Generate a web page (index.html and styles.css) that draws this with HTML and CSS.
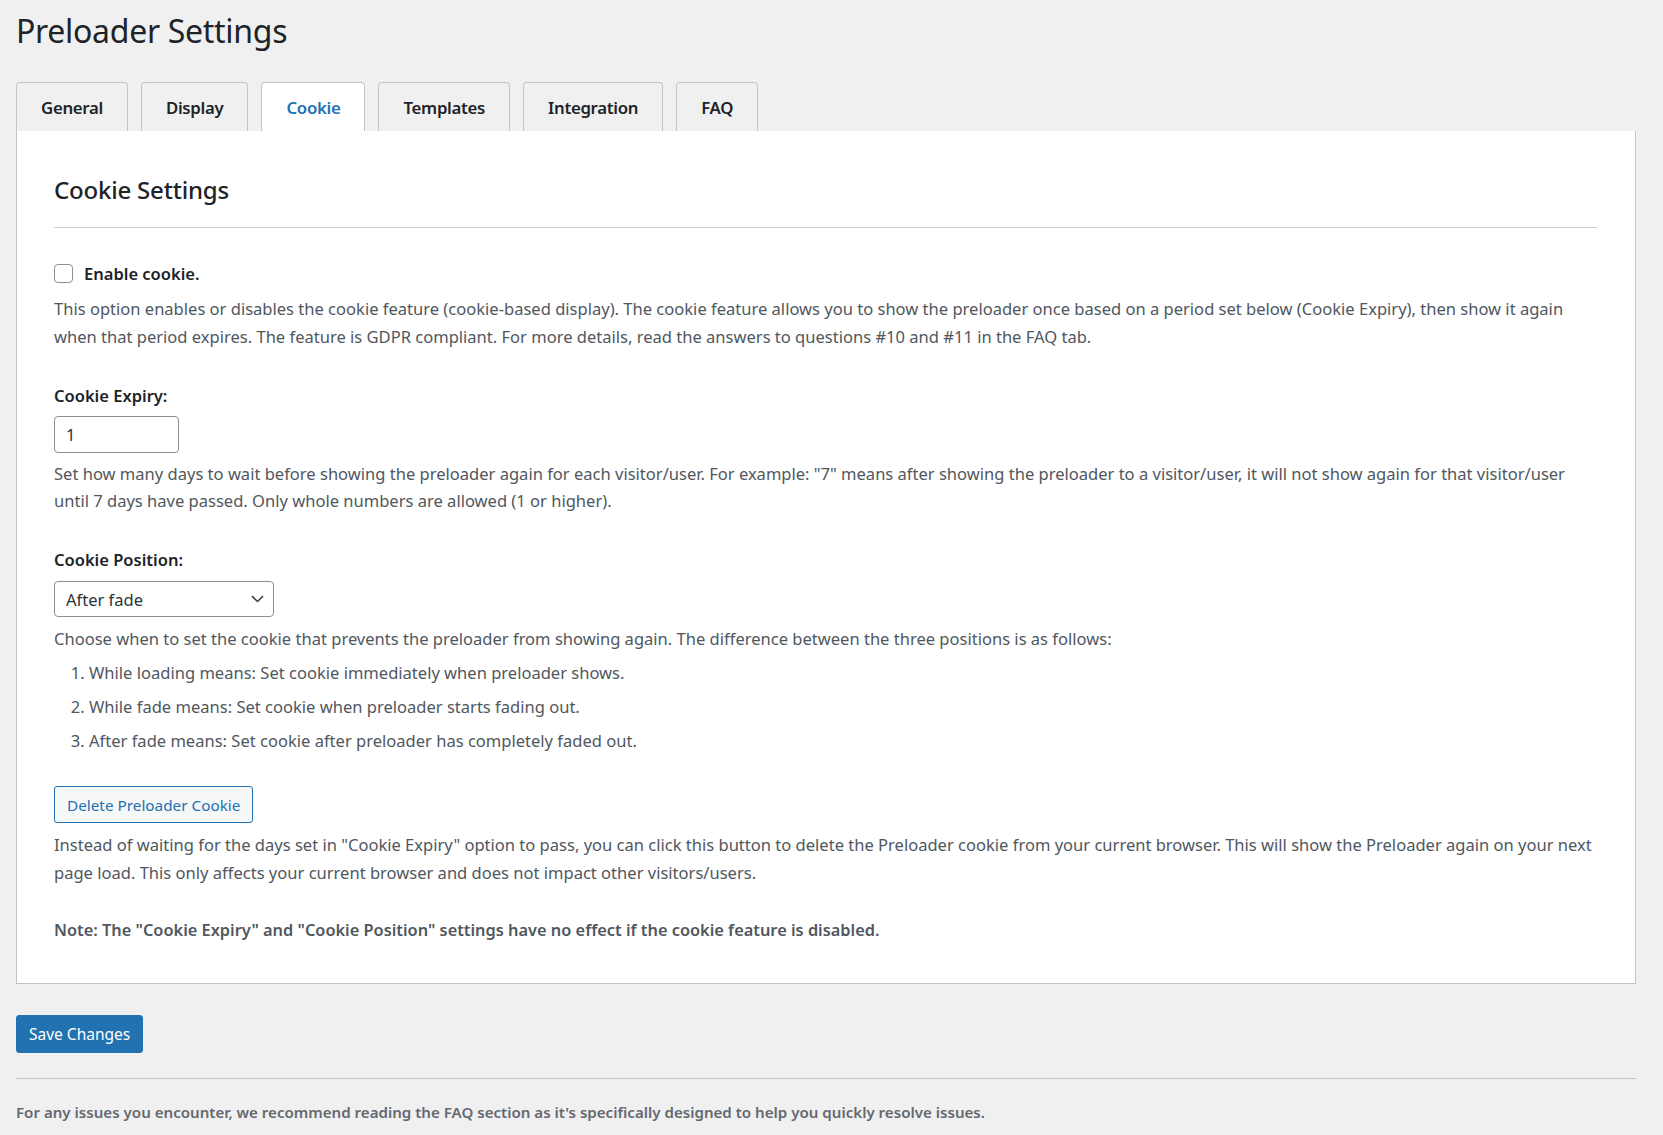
FILE: index.html
```html
<!DOCTYPE html>
<html lang="en">
<head>
<meta charset="utf-8">
<title>Preloader Settings</title>
<link rel="stylesheet" href="styles.css">
</head>
<body>
<div class="wrap">
  <h1 class="page-title">Preloader Settings</h1>
  <nav class="tabs">
    <a class="tab">General</a>
    <a class="tab">Display</a>
    <a class="tab active">Cookie</a>
    <a class="tab">Templates</a>
    <a class="tab">Integration</a>
    <a class="tab">FAQ</a>
  </nav>
  <div class="card">
    <h2 class="card-title">Cookie Settings</h2>
    <hr class="divider">
    <label class="check-row">
      <span class="checkbox"></span>
      <span class="check-label">Enable cookie.</span>
    </label>
    <p class="desc desc-check">This option enables or disables the cookie feature (cookie-based display). The cookie feature allows you to show the preloader once based on a period set below (Cookie Expiry), then show it again when that period expires. The feature is GDPR compliant. For more details, read the answers to questions #10 and #11 in the FAQ tab.</p>

    <div class="field">
      <div class="field-label">Cookie Expiry:</div>
      <input class="num-input" type="text" value="1">
      <p class="desc">Set how many days to wait before showing the preloader again for each visitor/user. For example: "7" means after showing the preloader to a visitor/user, it will not show again for that visitor/user until 7 days have passed. Only whole numbers are allowed (1 or higher).</p>
    </div>

    <div class="field">
      <div class="field-label">Cookie Position:</div>
      <div class="select">
        <span class="select-value">After fade</span>
        <svg class="chev" width="13" height="8" viewBox="0 0 13 8"><path d="M1 1.2 L6.5 6.5 L12 1.2" fill="none" stroke="#3c434a" stroke-width="1.6"/></svg>
      </div>
      <p class="desc desc-select">Choose when to set the cookie that prevents the preloader from showing again. The difference between the three positions is as follows:</p>
      <ol class="list">
        <li>While loading means: Set cookie immediately when preloader shows.</li>
        <li>While fade means: Set cookie when preloader starts fading out.</li>
        <li>After fade means: Set cookie after preloader has completely faded out.</li>
      </ol>
    </div>

    <div class="field field-btn">
      <button class="btn-secondary">Delete Preloader Cookie</button>
      <p class="desc">Instead of waiting for the days set in "Cookie Expiry" option to pass, you can click this button to delete the Preloader cookie from your current browser. This will show the Preloader again on your next page load. This only affects your current browser and does not impact other visitors/users.</p>
    </div>

    <p class="note">Note: The "Cookie Expiry" and "Cookie Position" settings have no effect if the cookie feature is disabled.</p>
  </div>
  <button class="btn-primary">Save Changes</button>
  <hr class="footer-rule">
  <p class="footer-text">For any issues you encounter, we recommend reading the FAQ section as it's specifically designed to help you quickly resolve issues.</p>
</div>
</body>
</html>
```
FILE: styles.css
```css
* { box-sizing: border-box; }
html, body { margin: 0; padding: 0; }
body {
  background: #f0f0f1;
  font-family: "Noto Sans", "Open Sans", sans-serif;
  color: #3c434a;
  font-size: 17px;
}
.wrap {
  padding: 0 27px 0 16px;
}
.page-title {
  margin: 0;
  padding-top: 8px;
  font-size: 32px;
  font-weight: 400;
  color: #1d2327;
  line-height: 46px;
  letter-spacing: -0.3px;
}
.tabs {
  display: flex;
  gap: 13px;
  margin-top: 28px;
  height: 49px;
}
.tab {
  display: flex;
  align-items: center;
  height: 49px;
  padding: 0 24px;
  border: 1px solid #c3c4c7;
  border-bottom: none;
  border-radius: 4px 4px 0 0;
  background: #f0f0f1;
  font-size: 16.8px;
  font-weight: 600;
  color: #1d2327;
  letter-spacing: -0.3px;
}
.tab.active {
  background: #fff;
  color: #2271b1;
}
.card {
  background: #fff;
  border: 1px solid #c3c4c7;
  border-top: none;
  padding: 42px 38px 38px 37px;
}
.card-title {
  margin: 0;
  font-size: 24px;
  font-weight: 500;
  color: #1d2327;
  line-height: 34px;
  letter-spacing: -0.2px;
}
.divider {
  border: 0;
  border-top: 1px solid #cfcfd1;
  margin: 20px 0 0;
}
.check-row {
  display: flex;
  align-items: center;
  gap: 11px;
  margin-top: 34px;
  height: 22px;
}
.checkbox {
  width: 19px;
  height: 19px;
  border: 1px solid #8c8f94;
  border-radius: 4px;
  background: #fff;
}
.check-label {
  font-weight: 600;
  font-size: 16.5px;
  color: #1d2327;
}
.desc {
  margin: 7px 0 0;
  font-size: 16.55px;
  line-height: 27.5px;
  color: #50575e;
}
.desc-check { margin-top: 11px; }
.field { margin-top: 33.5px; }
.field-label {
  font-size: 16.5px;
  font-weight: 600;
  color: #1d2327;
  line-height: 24px;
}
.num-input {
  display: block;
  margin-top: 8px;
  width: 125px;
  height: 37px;
  border: 1px solid #8c8f94;
  border-radius: 4px;
  padding: 0 11px;
  font-family: inherit;
  font-size: 16.5px;
  color: #2c3338;
  background: #fff;
}
.select {
  margin-top: 9px;
  width: 220px;
  height: 36px;
  border: 1px solid #8c8f94;
  border-radius: 4px;
  padding: 0 9px 0 11px;
  display: flex;
  align-items: center;
  justify-content: space-between;
  background: #fff;
}
.select-value {
  font-size: 16.5px;
  color: #2c3338;
}
.desc-select { margin-top: 8px; }
.list {
  margin: 6px 0 0;
  padding-left: 35px;
  font-size: 16.55px;
  line-height: 27.5px;
  color: #50575e;
}
.list li { margin-bottom: 6.5px; }
.field-btn { margin-top: 32px; }
.btn-secondary {
  display: block;
  height: 37px;
  padding: 0 12px;
  border: 1px solid #2271b1;
  border-radius: 3px;
  background: #f6f7f7;
  color: #2271b1;
  font-family: inherit;
  font-size: 15.3px;
}
.field-btn .desc { margin-top: 8px; }
.note {
  margin: 31px 0 0;
  font-size: 16.35px;
  font-weight: 600;
  line-height: 27.5px;
  color: #50575e;
}
.btn-primary {
  display: block;
  margin-top: 31px;
  height: 38px;
  padding: 0 12px;
  border: 1px solid #2271b1;
  border-radius: 3px;
  background: #2271b1;
  color: #fff;
  font-family: inherit;
  font-size: 15.5px;
}
.footer-rule {
  border: 0;
  border-top: 1px solid #c3c4c7;
  margin: 25px 0 0;
}
.footer-text {
  margin: 23px 0 0;
  font-size: 15.1px;
  font-weight: 600;
  color: #646970;
}
```
